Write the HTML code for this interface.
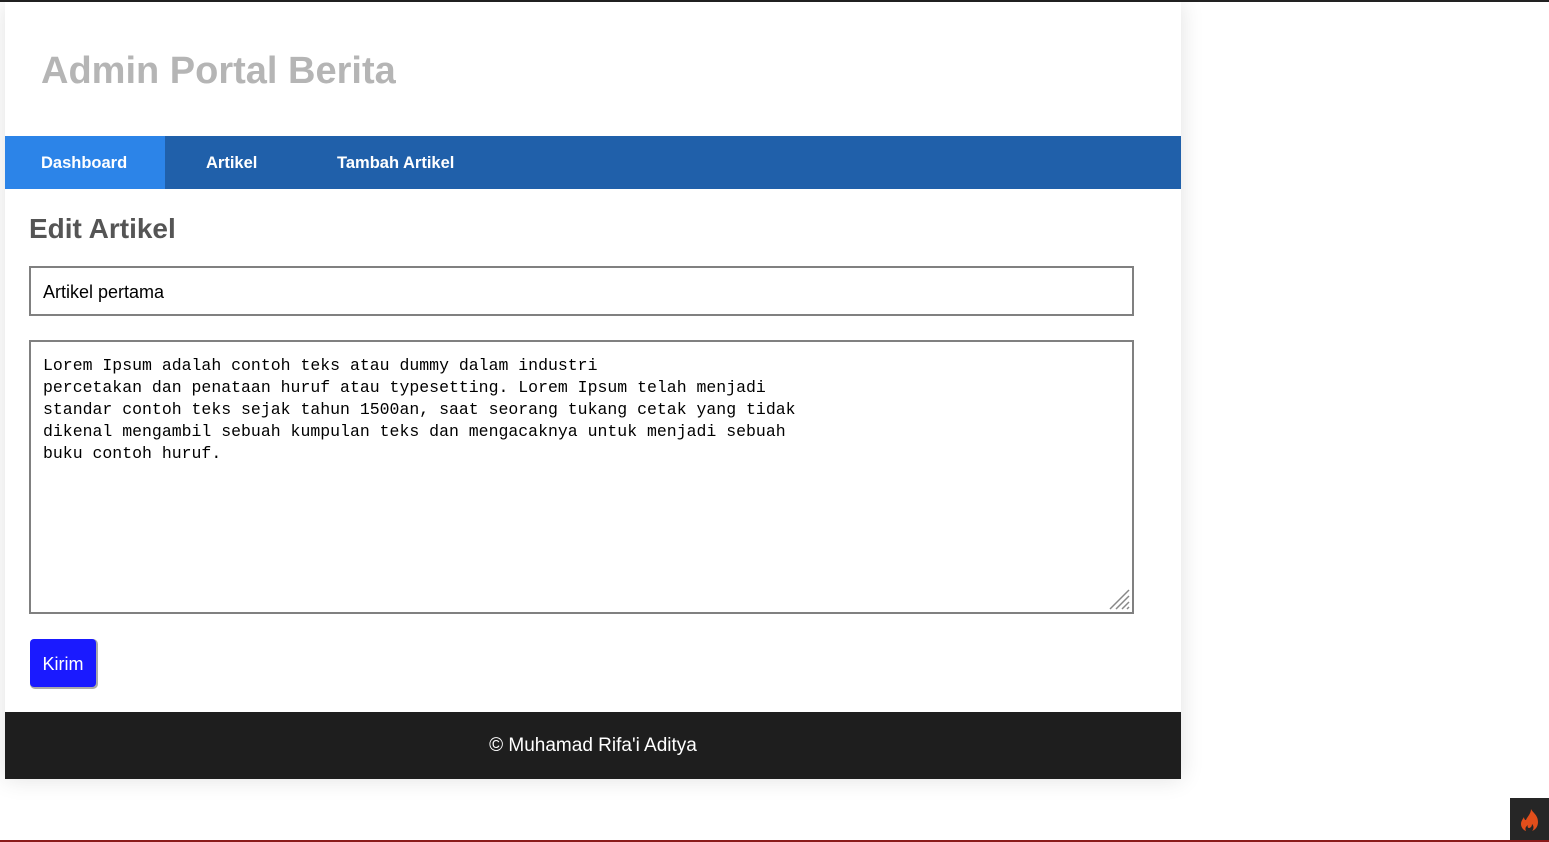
<!DOCTYPE html>
<html><head><meta charset="utf-8"><style>
html,body{margin:0;padding:0;width:1549px;height:842px;overflow:hidden;background:#fff;font-family:"Liberation Sans",Arial,sans-serif;position:relative}
.topline{position:absolute;left:0;top:0;width:1549px;height:2px;background:#222}
.botline{position:absolute;left:0;bottom:0;width:1549px;height:2px;background:#8a1a1a}
.wrap{position:absolute;left:5px;top:2px;width:1176px;height:777px;background:#fff;box-shadow:0 0 22px rgba(0,0,0,0.12)}
h1{position:absolute;left:36px;top:49px;margin:0;font-size:38px;font-weight:bold;color:#b5b5b5;line-height:40px}
.nav{position:absolute;left:0;top:134px;width:1176px;height:53px;background:#2060aa}
.nav a{position:absolute;top:0;height:53px;line-height:54px;color:#fff;font-weight:bold;font-size:16.5px;text-decoration:none}
.nav .act{left:0;width:160px;background:#2c84e8;padding-left:36px;box-sizing:border-box}
h2{position:absolute;left:24px;top:211px;margin:0;font-size:28px;line-height:32px;color:#555;font-weight:bold}
.inp{position:absolute;left:24px;top:264px;width:1105px;height:50px;border:2px solid #808080;box-sizing:border-box;font-size:18px;line-height:48px;padding-left:12px;color:#000}
.ta{position:absolute;left:24px;top:338px;width:1105px;height:274px;border:2px solid #808080;box-sizing:border-box;padding:13px 12px;font-family:"Liberation Mono",monospace;font-size:16.5px;line-height:22px;white-space:pre;color:#000}
.btn{position:absolute;left:25px;top:637px;width:66px;height:48px;background:#1a1aff;border-radius:4px;box-shadow:1px 1px 0 1px #aaa;color:#fff;font-size:18px;line-height:50px;text-align:center}
.foot{position:absolute;left:0;top:710px;width:1176px;height:67px;background:#1e1e1e;color:#fff;font-size:19px;line-height:67px;text-align:center}
.ci{position:absolute;left:1510px;top:798px;width:39px;height:42px;background:#262626}
</style></head><body>
<div class="topline"></div>
<div class="wrap">
<h1>Admin Portal Berita</h1>
<div class="nav"><a class="act">Dashboard</a><a style="left:201px">Artikel</a><a style="left:332px">Tambah Artikel</a></div>
<h2>Edit Artikel</h2>
<div class="inp">Artikel pertama</div>
<div class="ta">Lorem Ipsum adalah contoh teks atau dummy dalam industri
percetakan dan penataan huruf atau typesetting. Lorem Ipsum telah menjadi
standar contoh teks sejak tahun 1500an, saat seorang tukang cetak yang tidak
dikenal mengambil sebuah kumpulan teks dan mengacaknya untuk menjadi sebuah
buku contoh huruf.<svg style="position:absolute;right:2px;bottom:2px" width="22" height="22" viewBox="0 0 22 22"><g stroke="#888" stroke-width="1.5"><line x1="2" y1="21" x2="21" y2="2"/><line x1="8" y1="21" x2="21" y2="8"/><line x1="14" y1="21" x2="21" y2="14"/><line x1="19" y1="21" x2="21" y2="19"/></g></svg></div>
<div class="btn">Kirim</div>
<div class="foot">© Muhamad Rifa'i Aditya</div>
</div>
<div class="ci"><svg width="39" height="42" viewBox="0 0 39 42"><path d="M21 11c2 4 7 6 7 13c0 5-3 8-6 9c2-2 2-5 0-7c0 3-2 4-3 4c-1 0-2-1-1-3c-3 2-3 4-2 6c-3-1-5-4-5-7c0-3 2-5 3-7c0 2 1 3 2 3c1-3 5-6 5-11z" fill="#e24e1b"/></svg></div>
<div class="botline"></div>
</body></html>
